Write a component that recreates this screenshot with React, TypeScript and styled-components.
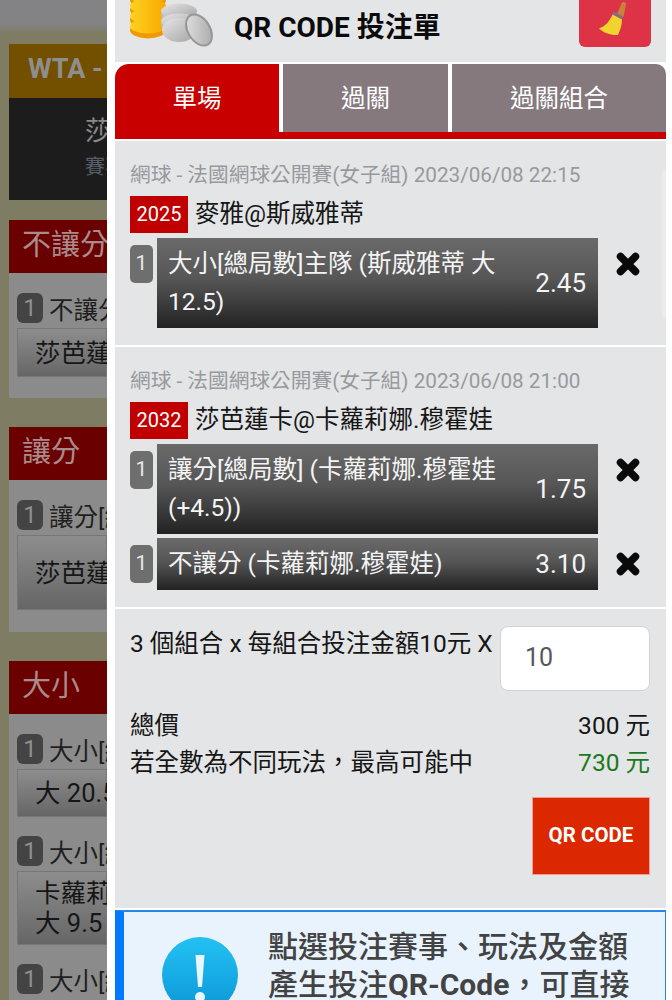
import {ReactNode} from "react";
import styled, {createGlobalStyle} from "styled-components";

const GlobalStyle = createGlobalStyle`
  html, body {
    margin: 0;
    padding: 0;
    background: #fff;
  }

  * {
    box-sizing: border-box;
  }
`

const Page = styled.div`
  display: flex;
  width: 672px;
  height: 1000px;
  overflow: hidden;

  font-family: Roboto, "Noto Sans CJK TC", sans-serif;
`

/* page dimmed behind the drawer */
const Backdrop = styled.div`
  width: 107px;
  height: 1000px;
  flex-shrink: 0;
  overflow: hidden;
  background: #7e7c62;
  white-space: nowrap;
`

const BackTop = styled.div`
  height: 34px;
  background: linear-gradient(#838385 70%, #7e7c62);
`

const BackContent = styled.div`
  padding: 10px 0 0 9px;
`

const BackTitle = styled.div`
  height: 54px;
  background: #735000;
  color: #8e8e8e;
  font-size: 27px;
  font-weight: 700;
  line-height: 50px;
  padding-left: 19px;
`

const BackMatch = styled.div`
  height: 102px;
  background: #1c1c1c;
  color: #8a8a8a;
  font-size: 26px;
  padding: 15px 0 0 76px;
  line-height: 36px;

  small {
    display: block;
    font-size: 20px;
    line-height: 36px;
    color: #565e69;
  }
`

const BackHead = styled.div<{$gap: number}>`
  height: 53px;
  margin-top: ${props => props.$gap}px;
  background: #6b0000;
  color: #a98b8b;
  font-size: 29px;
  line-height: 50px;
  padding-left: 13px;
`

const BackBody = styled.div<{$height: number}>`
  height: ${props => props.$height}px;
  background: #8b8b8b;
  padding: 20px 0 0 8px;
`

const BackLine = styled.div`
  display: flex;
  align-items: center;
  gap: 6px;
  height: 30px;
  color: #1f1f1f;
  font-size: 24.500px;
`

const BackCount = styled.span`
  width: 26px;
  height: 30px;
  flex-shrink: 0;
  border-radius: 6px;
  background: #444;
  color: #8f8f8f;
  font-size: 24px;
  line-height: 30px;
  text-align: center;
`

const BackBox = styled.div<{$height: number}>`
  height: ${props => props.$height}px;
  margin: 5px 0 19px;
  padding-left: 17px;
  display: flex;
  flex-direction: column;
  justify-content: center;
  border: 1px solid #777;
  background: linear-gradient(#8d8d8d, #666);
  color: #161616;
  font-size: 25.500px;
  line-height: 30px;
`

/* drawer */
const Drawer = styled.div`
  position: relative;
  width: 565px;
  height: 1000px;
  flex-shrink: 0;
  overflow: hidden;
  background: #fff;
  padding: 0 6px 0 8px;
`

const Header = styled.header`
  display: flex;
  height: 62px;
  background: #e4e5e7;
  overflow: hidden;
  padding-left: 15px;
`

const Coins = styled.svg`
  width: 86px;
  height: 48px;
  flex-shrink: 0;
`

const Title = styled.h1`
  flex: 1;
  margin: 0 0 0 18px;
  font-size: 28px;
  font-weight: 700;
  line-height: 56px;
  color: #0b0b0b;
  white-space: nowrap;
`

const ClearButton = styled.div`
  width: 72px;
  height: 47px;
  margin-right: 15px;
  padding-right: 4px;
  display: flex;
  align-items: flex-start;
  justify-content: center;
  background: #de3347;
  border-radius: 0 0 6px 6px;
`

const Tabs = styled.div`
  display: flex;
  gap: 4px;
  height: 75px;
  margin-top: 2px;
  border-bottom: 7px solid #c80000;
`

const Tab = styled.div<{$active?: boolean; $width: number; $radius: string}>`
  width: ${props => props.$width}px;
  height: 68px;
  flex-shrink: 0;
  background: ${props => props.$active ? "#c80000" : "#85797e"};
  border-radius: ${props => props.$radius};
  color: #fff;
  font-size: 24.500px;
  line-height: 69px;
  text-align: center;
`

const MatchSection = styled.section`
  margin-top: 2px;
  padding: 19px 0 17px 15px;
  background: #e4e5e7;

  & + & {
    margin-top: 2px;
  }
`

const Meta = styled.div`
  height: 28px;
  color: #979a9d;
  font-size: 20.700px;
  line-height: 30px;
  white-space: nowrap;
`

const MatchName = styled.div`
  display: flex;
  align-items: flex-start;
  gap: 7px;
  height: 37px;
  margin: 8px 0 5px;
  color: #161616;
  font-size: 24.500px;
  line-height: 36px;
  white-space: nowrap;
`

const MatchCode = styled.span`
  width: 58px;
  height: 37px;
  background: #c00000;
  color: #fff;
  font-size: 20px;
  line-height: 37px;
  text-align: center;
`

const BetRow = styled.div`
  display: flex;
  align-items: flex-start;

  & + & {
    margin-top: 4px;
  }
`

const BetCount = styled.span`
  width: 23px;
  height: 38px;
  margin-top: 7px;
  flex-shrink: 0;
  border-radius: 5px;
  background: #6e6e6e;
  color: #e8e8e8;
  font-size: 21px;
  line-height: 36px;
  text-align: center;
`

const BetBody = styled.div`
  display: flex;
  align-items: center;
  width: 441px;
  margin-left: 4px;
  padding: 7px 12px 7px 11px;
  background: linear-gradient(#6a6a6a, #565656 45%, #222);
  color: #f4f4f4;
  font-size: 24.500px;
  line-height: 38px;
`

const BetLabel = styled.div`
  flex: 1;
  padding-right: 26px;
`

const BetOdds = styled.span`
  font-size: 26px;
`

const Close = styled.svg`
  width: 24px;
  height: 24px;
  margin: 14px 0 0 18px;
  flex-shrink: 0;
`

const StakeSection = styled.section`
  margin-top: 2px;
  height: 299px;
  padding: 17px 16px 0 15px;
  background: #e4e5e7;
`

const StakeRow = styled.div`
  display: flex;
  justify-content: space-between;
  align-items: flex-start;
  color: #161616;
  font-size: 24.500px;
  line-height: 36px;
  white-space: nowrap;
`

const StakeInput = styled.div`
  width: 150px;
  height: 65px;
  padding-left: 24px;
  background: #fff;
  border: 1px solid #ced4da;
  border-radius: 8px;
  color: #52595f;
  font-size: 25px;
  line-height: 62px;
`

const Totals = styled.div`
  margin-top: 16px;
`

const TotalRow = styled.div<{$accent?: boolean}>`
  display: flex;
  justify-content: space-between;
  height: 37px;
  color: #161616;
  font-size: 24.500px;
  line-height: 37px;

  b {
    font-weight: 400;
    color: ${props => props.$accent ? "#1a7a1a" : "#161616"};
  }
`

const Actions = styled.div`
  display: flex;
  justify-content: flex-end;
  margin-top: 16px;
`

const QrButton = styled.div`
  width: 118px;
  height: 78px;
  background: #dc2800;
  border: 1px solid #f59a90;
  color: #fff;
  font-size: 20.500px;
  font-weight: 700;
  line-height: 74px;
  text-align: center;
`

const Notice = styled.aside`
  display: flex;
  height: 120px;
  margin-top: 2px;
  background: #e8f3fe;
  border: 2px solid #2a86e6;
  border-left: 9px solid #007bff;
  border-right-width: 1px;
  padding: 16px 0 0 38px;
`

const NoticeIcon = styled.svg`
  width: 76px;
  height: 76px;
  margin-top: 9px;
  flex-shrink: 0;
`

const NoticeText = styled.div`
  margin-left: 30px;
  color: #434343;
  font-size: 30px;
  font-weight: 500;
  line-height: 38px;
  white-space: nowrap;
`

const ScrollHint = styled.div`
  position: absolute;
  top: 170px;
  right: 6px;
  width: 4px;
  height: 148px;
  background: #ececee;
  border-radius: 4px 0 0 4px;
`

type Bet = {
    label: ReactNode
    odds: string
}

type MatchProps = {
    meta: string
    code: string
    name: string
    bets: Bet[]
}

const Match = (props: MatchProps) => {
    return (
        <MatchSection>
            <Meta>{props.meta}</Meta>
            <MatchName>
                <MatchCode>{props.code}</MatchCode>
                {props.name}
            </MatchName>
            {props.bets.map((bet) => (
                <BetRow key={bet.odds}>
                    <BetCount>1</BetCount>
                    <BetBody>
                        <BetLabel>{bet.label}</BetLabel>
                        <BetOdds>{bet.odds}</BetOdds>
                    </BetBody>
                    <Close viewBox="0 0 24 24">
                        <path d="M4.5 4.5L19.500 19.500M19.500 4.500L4.500 19.500" stroke="#0a0a0a" strokeWidth="7.5" strokeLinecap="round"/>
                    </Close>
                </BetRow>
            ))}
        </MatchSection>
    )
}

const CoinStack = (props: {x: number; top: number; count: number; rx: number; light: string; dark: string}) => {
    const coins = Array.from({length: props.count}, (_, i) => i);

    return (
        <g>
            {coins.map((i) => (
                <g key={i}>
                    <ellipse cx={props.x} cy={props.top + i * 10 + 4} rx={props.rx} ry="8.500" fill={props.dark}/>
                    <ellipse cx={props.x} cy={props.top + i * 10} rx={props.rx} ry="7.500" fill={props.light}/>
                </g>
            ))}
        </g>
    )
}

const App = () => {
    return (
        <Page>
            <GlobalStyle/>
            <Backdrop>
                <BackTop/>
                <BackContent>
                    <BackTitle>WTA - 法國</BackTitle>
                    <BackMatch>
                        莎芭蓮卡
                        <small>賽事</small>
                    </BackMatch>

                    <BackHead $gap={20}>不讓分</BackHead>
                    <BackBody $height={125}>
                        <BackLine><BackCount>1</BackCount>不讓分</BackLine>
                        <BackBox $height={49}>莎芭蓮卡</BackBox>
                    </BackBody>

                    <BackHead $gap={29}>讓分</BackHead>
                    <BackBody $height={152}>
                        <BackLine><BackCount>1</BackCount>讓分[總局數]</BackLine>
                        <BackBox $height={75}>莎芭蓮卡</BackBox>
                    </BackBody>

                    <BackHead $gap={29}>大小</BackHead>
                    <BackBody $height={300}>
                        <BackLine><BackCount>1</BackCount>大小[總局數]</BackLine>
                        <BackBox $height={48}>大 20.5</BackBox>
                        <BackLine><BackCount>1</BackCount>大小[總局數]</BackLine>
                        <BackBox $height={74}>卡蘿莉娜<br/>大 9.5</BackBox>
                        <BackLine><BackCount>1</BackCount>大小[總局數]</BackLine>
                    </BackBody>
                </BackContent>
            </Backdrop>

            <Drawer>
                <Header>
                    <Coins viewBox="0 0 86 48">
                        <defs>
                            <linearGradient id="silver" x1="0" y1="0" x2="1" y2="1">
                                <stop offset="0" stopColor="#e6e6e6"/>
                                <stop offset="1" stopColor="#a4a4a4"/>
                            </linearGradient>
                            <linearGradient id="gold" x1="0" y1="0" x2="1" y2="0">
                                <stop offset="0" stopColor="#ffd21f"/>
                                <stop offset="1" stopColor="#f9a800"/>
                            </linearGradient>
                        </defs>
                        <CoinStack x={18} top={-4} rx={18} count={4} light="url(#gold)" dark="#ee9a00"/>
                        <CoinStack x={49} top={11} rx={18} count={2} light="url(#silver)" dark="#bdbdbd"/>
                        <ellipse cx="49" cy="30" rx="17" ry="12" fill="url(#silver)"/>
                        <ellipse cx="69" cy="30" rx="11" ry="17" transform="rotate(-32 69 30)" fill="url(#silver)" stroke="#979797" strokeWidth="2"/>
                    </Coins>
                    <Title>QR CODE 投注單</Title>
                    <ClearButton>
                        <svg width="30" height="36" viewBox="0 0 30 36">
                            <path d="M19 14L23.500 3.500c1-2.500 5-2 4.500 1L25.500 17z" fill="#c9803a"/>
                            <path d="M16 11.500l9 5-1 3-9.500-5z" fill="#7d6f8a"/>
                            <path d="M14.500 14.500l9.500 5c0 6-2 11-4 15.500-7 .5-14-2-19-6.500 6-2 10.500-7 13.500-14z" fill="#f2d22e"/>
                        </svg>
                    </ClearButton>
                </Header>

                <Tabs>
                    <Tab $active $width={164} $radius="14px 0 0 0">單場</Tab>
                    <Tab $width={165} $radius="0">過關</Tab>
                    <Tab $width={214} $radius="0 10px 0 0">過關組合</Tab>
                </Tabs>

                <Match
                    meta="網球 - 法國網球公開賽(女子組) 2023/06/08 22:15"
                    code="2025"
                    name="麥雅@斯威雅蒂"
                    bets={[{label: "大小[總局數]主隊 (斯威雅蒂 大 12.5)", odds: "2.45"}]}
                />
                <Match
                    meta="網球 - 法國網球公開賽(女子組) 2023/06/08 21:00"
                    code="2032"
                    name="莎芭蓮卡@卡蘿莉娜.穆霍娃"
                    bets={[
                        {label: "讓分[總局數] (卡蘿莉娜.穆霍娃 (+4.5))", odds: "1.75"},
                        {label: "不讓分 (卡蘿莉娜.穆霍娃)", odds: "3.10"},
                    ]}
                />

                <StakeSection>
                    <StakeRow>
                        3 個組合 x 每組合投注金額10元 X
                        <StakeInput>10</StakeInput>
                    </StakeRow>
                    <Totals>
                        <TotalRow>總價<b>300 元</b></TotalRow>
                        <TotalRow $accent>若全數為不同玩法，最高可能中<b>730 元</b></TotalRow>
                    </Totals>
                    <Actions>
                        <QrButton>QR CODE</QrButton>
                    </Actions>
                </StakeSection>

                <Notice>
                    <NoticeIcon viewBox="0 0 76 76">
                        <defs>
                            <linearGradient id="info" x1="0" y1="0" x2="0" y2="1">
                                <stop offset="0" stopColor="#23c1f3"/>
                                <stop offset="1" stopColor="#0b97d8"/>
                            </linearGradient>
                        </defs>
                        <circle cx="38" cy="38" r="38" fill="url(#info)"/>
                        <path d="M33.500 18h9l-2.500 32h-4z" fill="#e8f7fd"/>
                        <circle cx="38" cy="60" r="5" fill="#e8f7fd"/>
                    </NoticeIcon>
                    <NoticeText>
                        點選投注賽事、玩法及金額<br/>
                        產生投注<strong>QR-Code</strong>，可直接
                    </NoticeText>
                </Notice>

                <ScrollHint/>
            </Drawer>
        </Page>
    )
}

export default App;
